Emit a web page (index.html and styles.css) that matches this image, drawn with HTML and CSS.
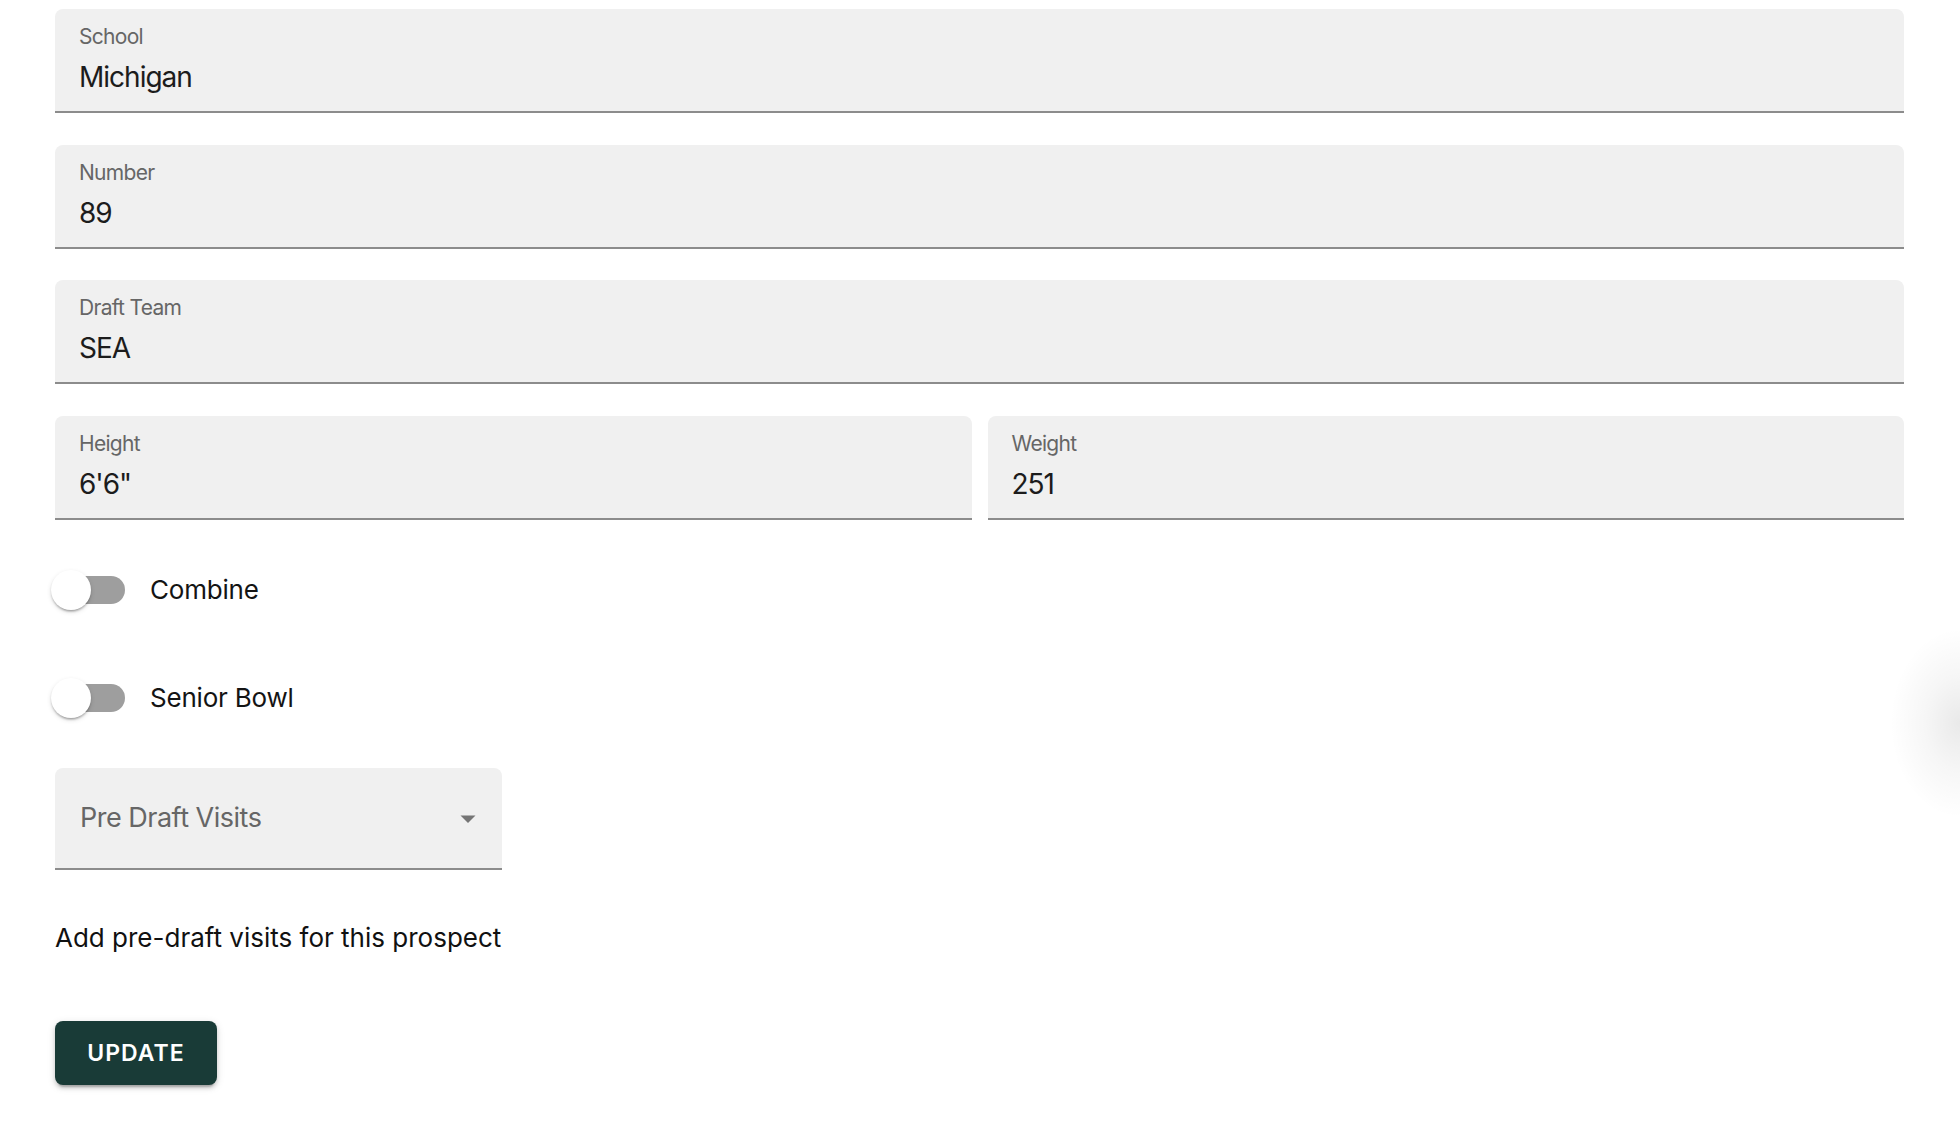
FILE: index.html
```html
<!DOCTYPE html>
<html lang="en">
<head>
<meta charset="utf-8">
<title>Prospect</title>
<link rel="stylesheet" href="styles.css">
</head>
<body>
<main class="form">
  <div class="field">
    <div class="field-label">School</div>
    <div class="field-value">Michigan</div>
  </div>
  <div class="field">
    <div class="field-label">Number</div>
    <div class="field-value">89</div>
  </div>
  <div class="field">
    <div class="field-label">Draft Team</div>
    <div class="field-value">SEA</div>
  </div>
  <div class="field-row">
    <div class="field">
      <div class="field-label">Height</div>
      <div class="field-value">6'6"</div>
    </div>
    <div class="field">
      <div class="field-label">Weight</div>
      <div class="field-value">251</div>
    </div>
  </div>

  <div class="toggles">
    <label class="toggle-row">
      <span class="switch"><span class="track"></span><span class="thumb"></span></span>
      <span class="toggle-label">Combine</span>
    </label>
    <label class="toggle-row">
      <span class="switch"><span class="track"></span><span class="thumb"></span></span>
      <span class="toggle-label">Senior Bowl</span>
    </label>
  </div>

  <div class="select">
    <span class="select-text">Pre Draft Visits</span>
    <svg class="select-arrow" width="16" height="8" viewBox="0 0 16 8"><path d="M0.5 0.5 L8 8 L15.5 0.5 Z" fill="#757575"/></svg>
  </div>

  <p class="helper">Add pre-draft visits for this prospect</p>

  <button class="btn" type="button">UPDATE</button>
</main>
<div class="fab-shadow"></div>
</body>
</html>
```

FILE: styles.css
```css
html, body {
  margin: 0;
  padding: 0;
  background: #ffffff;
  overflow: hidden;
}

body {
  width: 1960px;
  height: 1140px;
  font-family: Inter, "Noto Sans", sans-serif;
  color: #1f1f1f;
  position: relative;
}

.form {
  padding: 9px 56px 0 55px;
  display: flex;
  flex-direction: column;
}

.field {
  box-sizing: border-box;
  height: 104px;
  margin-bottom: 31.5px;
  background: #f0f0f0;
  border-radius: 8px 8px 0 0;
  border-bottom: 2px solid #8c8c8c;
  padding: 15px 24px 0 24px;
}

.field-label {
  font-size: 21px;
  line-height: 26px;
  letter-spacing: -0.7px;
  color: #666666;
}

.field-value {
  margin-top: 9px;
  font-size: 28px;
  line-height: 36px;
  letter-spacing: -1px;
  color: #1c1c1c;
}

.field-row {
  display: grid;
  grid-template-columns: 1fr 1fr;
  column-gap: 16px;
}

.field-row .field {
  margin-bottom: 0;
}

.toggles {
  display: flex;
  flex-direction: column;
  gap: 28px;
  margin-top: 30px;
}

.toggle-row {
  height: 80px;
  display: flex;
  align-items: center;
  margin-left: -4px;
}

.switch {
  position: relative;
  width: 74px;
  height: 40px;
  flex: none;
}

.track {
  position: absolute;
  left: 11px;
  top: 6px;
  width: 63px;
  height: 28px;
  border-radius: 14px;
  background: #9e9e9e;
}

.thumb {
  position: absolute;
  left: 0;
  top: 0;
  width: 40px;
  height: 40px;
  border-radius: 50%;
  background: #ffffff;
  box-shadow: 0 3px 2px -2px rgba(0,0,0,0.2), 0 2px 2px 0 rgba(0,0,0,0.14), 0 2px 5px 0 rgba(0,0,0,0.12);
}

.toggle-label {
  margin-left: 25px;
  font-size: 26px;
  line-height: 36px;
  letter-spacing: -0.2px;
  color: #141414;
}

.select {
  box-sizing: border-box;
  margin-top: 30px;
  width: 447px;
  height: 102px;
  background: #f0f0f0;
  border-radius: 8px 8px 0 0;
  border-bottom: 2px solid #8c8c8c;
  display: flex;
  align-items: center;
  justify-content: space-between;
  padding: 0 26px 0 25px;
}

.select-text {
  font-size: 27px;
  line-height: 34px;
  letter-spacing: -0.5px;
  color: #666666;
}

.select-arrow {
  display: block;
  margin-top: 2px;
}

.helper {
  margin: 50px 0 0 0;
  font-size: 26px;
  line-height: 36px;
  color: #111111;
}

.btn {
  align-self: flex-start;
  margin-top: 65px;
  width: 162px;
  height: 64px;
  border: none;
  border-radius: 8px;
  background: #193b37;
  color: #ffffff;
  font-family: Inter, "Noto Sans", sans-serif;
  font-size: 23px;
  font-weight: 600;
  letter-spacing: 1px;
  box-shadow: 0 5px 2px -3px rgba(0,0,0,0.2), 0 3px 4px 0 rgba(0,0,0,0.14), 0 2px 9px 0 rgba(0,0,0,0.12);
  padding: 0;
}

.fab-shadow {
  position: absolute;
  right: 0;
  top: 628px;
  width: 70px;
  height: 190px;
  background: radial-gradient(ellipse 70px 95px at 100% 50%, rgba(0,0,0,0.085) 0%, rgba(0,0,0,0.035) 50%, rgba(0,0,0,0) 100%);
}
```
